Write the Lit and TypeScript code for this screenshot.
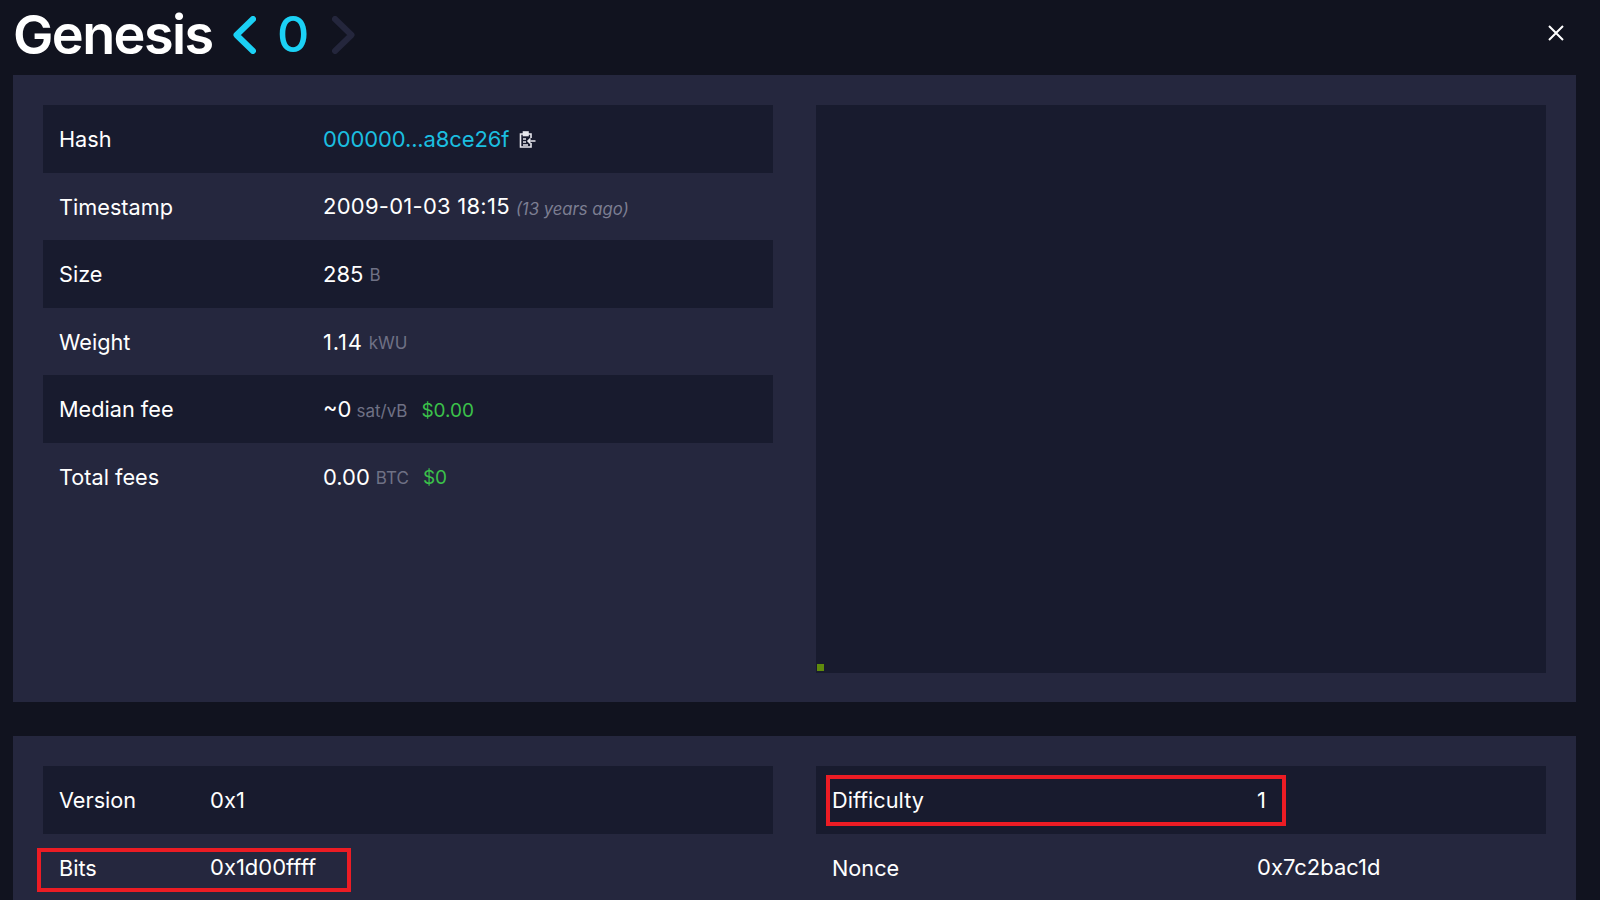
import { LitElement, html, css } from "lit";
import { customElement } from "lit/decorators.js";

@customElement("app-root")
export class AppRoot extends LitElement {
  static styles = css`
    :host {
      display: block;
      width: 1600px;
      height: 900px;
      overflow: hidden;
      background: #11131f;
      color: #fff;
      font-family: Inter, "Liberation Sans", sans-serif;
      font-size: 22px;
    }
    .head {
      height: 75px;
      padding: 0 36px 6px 13px;
      box-sizing: border-box;
      display: flex;
      align-items: center;
    }
    h1 {
      margin: 0;
      font-size: 54px;
      font-weight: 600;
      letter-spacing: -1.6px;
      line-height: 69px;
    }
    .chev { display: block; margin-left: 20px; }
    .height { color: #1bd1f5; font-size: 50px; font-weight: 500; margin-left: 21.5px; line-height: 69px; }
    .next { margin-left: 22.5px; }
    .close { margin-left: auto; margin-bottom: 4px; display: block; }
    .panel {
      margin: 0 24px 34px 13px;
      padding: 30px;
      background: #25273e;
      display: grid;
      grid-template-columns: 730px 730px;
      column-gap: 43px;
    }
    .top { height: 627px; box-sizing: border-box; }
    .rows { display: flex; flex-direction: column; }
    .row {
      position: relative;
      height: 67.6px;
      padding-left: 16px;
      display: flex;
      align-items: center;
      line-height: 1;
    }
    .row.odd { background: #181b2e; }
    .label { flex: none; width: 264px; font-size: 21.7px; margin-top: 2px; }
    .short .label { width: 151px; }
    .wide .label { width: 425px; }
    .link { color: #1bbfe0; letter-spacing: -0.13px; }
    .copy { display: block; margin: 2px 0 0 10px; }
    .ts { letter-spacing: 0.25px; }
    .tight { letter-spacing: 0.8px; }
    .ago { color: #7c7e92; font-size: 16.7px; font-style: italic; margin: 5px 0 0 6px; }
    .unit { color: #6f7185; font-size: 17px; margin: 4px 0 0 6px; }
    .unit.snug { margin-left: 5px; }
    .usd { color: #3bc14a; font-size: 19px; margin: 2px 0 0 14px; }
    .chart {
      position: relative;
      background: #181b2e;
      height: 568px;
    }
    .dot {
      position: absolute;
      left: 1px;
      bottom: 2px;
      width: 7px;
      height: 7px;
      background: #5f8a0c;
    }
    .mark {
      position: absolute;
      box-sizing: border-box;
      border: 4px solid #ec1c24;
    }
    .mark-bits { left: -6px; top: 14px; width: 314px; height: 44px; }
    .mark-diff { left: 10px; top: 9px; width: 460px; height: 51px; }
  `;

  private row(label: string, value: unknown, odd: boolean) {
    return html`<div class="row ${odd ? "odd" : ""}"><span class="label">${label}</span>${value}</div>`;
  }

  render() {
    return html`
      <header class="head">
        <h1>Genesis</h1>
        <svg class="chev" width="23" height="38" viewBox="0 0 23 38" fill="none" stroke="#1bd1f5" stroke-width="6" stroke-linecap="round" stroke-linejoin="round"><path d="M20 3 L3.5 19 L20 35"/></svg>
        <span class="height">0</span>
        <svg class="chev next" width="23" height="38" viewBox="0 0 23 38" fill="none" stroke="#24263c" stroke-width="6" stroke-linecap="round" stroke-linejoin="round"><path d="M3 3 L19.5 19 L3 35"/></svg>
        <svg class="close" width="16" height="16" viewBox="0 0 16 16" fill="none" stroke="#fff" stroke-width="2"><path d="M1 1 L15 15 M15 1 L1 15"/></svg>
      </header>

      <section class="panel top">
        <div class="rows">
          ${this.row("Hash", html`<span class="link">000000...a8ce26f</span>
            <svg class="copy" width="17" height="17" viewBox="0 0 17 17" fill="none" stroke="#e8e8ee" stroke-width="1.6">
              <path d="M4 3 H1.5 V16 H12 V12"/><path d="M9 3 H12 V7"/><rect x="4.5" y="1" width="4.5" height="3.5" fill="#e8e8ee"/>
              <path d="M4 8 H7 M4 11 H7 M4 14 H9"/><path d="M16.5 10 H9 M11.5 7.5 L9 10 L11.5 12.5"/>
            </svg>`, true)}
          ${this.row("Timestamp", html`<span class="ts">2009-01-03 18:15</span><span class="ago">(13 years ago)</span>`, false)}
          ${this.row("Size", html`<span>285</span><span class="unit">B</span>`, true)}
          ${this.row("Weight", html`<span class="tight">1.14</span><span class="unit">kWU</span>`, false)}
          ${this.row("Median fee", html`<span>~0</span><span class="unit snug">sat/vB</span><span class="usd">$0.00</span>`, true)}
          ${this.row("Total fees", html`<span>0.00</span><span class="unit">BTC</span><span class="usd">$0</span>`, false)}
        </div>
        <div class="chart"><div class="dot"></div></div>
      </section>

      <section class="panel">
        <div class="rows short">
          ${this.row("Version", html`<span>0x1</span>`, true)}
          <div class="row"><span class="label">Bits</span><span>0x1d00ffff</span><div class="mark mark-bits"></div></div>
        </div>
        <div class="rows wide">
          <div class="row odd"><span class="label">Difficulty</span><span>1</span><div class="mark mark-diff"></div></div>
          ${this.row("Nonce", html`<span>0x7c2bac1d</span>`, false)}
        </div>
      </section>
    `;
  }
}
